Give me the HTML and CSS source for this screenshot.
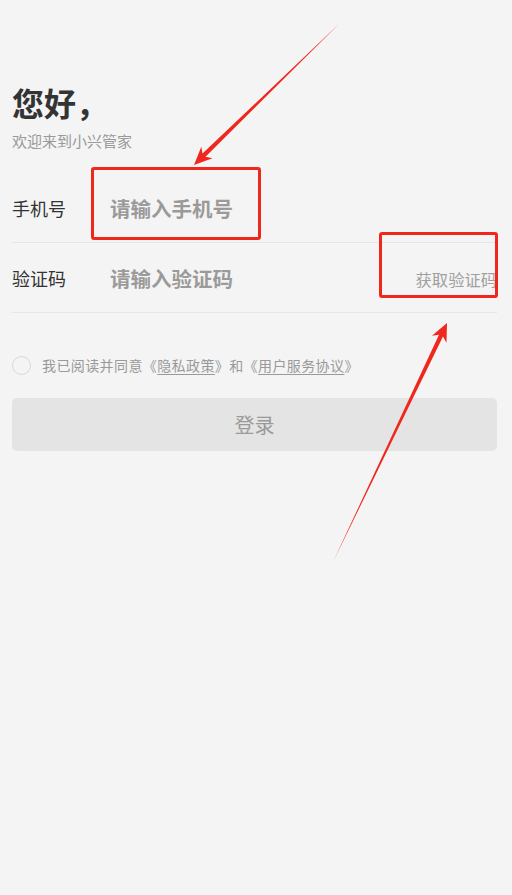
FILE: index.html
```html
<!DOCTYPE html>
<html lang="zh-Hans">

<head>
  <meta charset="UTF-8" />
  <meta name="viewport" content="width=device-width, initial-scale=1.0" />
  <title>登录</title>
  <link rel="stylesheet" href="styles.css">
</head>

<body>
  <div class="page">
    <h1 class="hello">您好，</h1>
    <div class="welcome">欢迎来到小兴管家</div>

    <div class="form">
      <div class="row">
        <div class="label">手机号</div>
        <div class="input">请输入手机号</div>
      </div>
      <div class="row">
        <div class="label">验证码</div>
        <div class="input">请输入验证码</div>
        <div class="get-code">获取验证码</div>
      </div>
    </div>

    <div class="agree">
      <span class="check"></span>
      <span>我已阅读并同意《<u>隐私政策</u>》和《<u>用户服务协议</u>》</span>
    </div>

    <div class="login-btn">登录</div>
  </div>

  <!-- 标注 -->
  <div class="mark mark-phone"></div>
  <div class="mark mark-code"></div>
  <svg class="arrows" width="512" height="895" viewBox="0 0 512 895">
    <polygon fill="#f0271c" points="340,23 202.5,153.6 201.3,146.7 194,165 212.5,158.2 205.5,156.8" />
    <polygon fill="#f0271c" points="333,562 443,336.6 446.5,342.7 447,323 432,335.8 439,334.7" />
  </svg>
</body>

</html>
```

FILE: styles.css
```css
* {
  box-sizing: border-box;
}

body {
  margin: 0;
  background-color: #f4f4f4;
  font-family: "Noto Sans CJK SC", "Noto Sans", sans-serif;
  color: #333;
}

.page {
  padding: 80px 15px 0 12px;
}

.hello {
  font-size: 32px;
  font-weight: bold;
  line-height: 44px;
  margin: 0;
  color: #333;
}

.welcome {
  font-size: 15px;
  line-height: 22px;
  color: #999;
  margin-top: 6px;
}

.form {
  margin-top: 21px;
}

.row {
  display: flex;
  align-items: center;
  height: 70px;
  border-bottom: 1px solid #e6e6e6;
}

.label {
  width: 98px;
  font-size: 18px;
  color: #333;
}

.input {
  flex: 1;
  font-size: 20.5px;
  font-weight: bold;
  color: #9a9a9a;
}

.get-code {
  font-size: 16.3px;
  color: #a0a0a0;
  padding-top: 2px;
}

.agree {
  display: flex;
  align-items: center;
  gap: 11px;
  margin-top: 42px;
  font-size: 14px;
  letter-spacing: 0.4px;
  color: #999;
}

.agree u {
  text-underline-offset: 3px;
}

.check {
  width: 19px;
  height: 19px;
  border: 1px solid #d8d8d8;
  border-radius: 50%;
}

.login-btn {
  margin-top: 23px;
  height: 53px;
  border-radius: 5px;
  background-color: #e4e4e4;
  color: #9a9a9a;
  font-size: 20px;
  display: flex;
  justify-content: center;
  align-items: center;
}

.mark {
  position: absolute;
  border: 3px solid #f0271c;
  border-radius: 3px;
}

.mark-phone {
  left: 91px;
  top: 167px;
  width: 170px;
  height: 73px;
}

.mark-code {
  left: 379px;
  top: 232px;
  width: 119px;
  height: 66px;
}

.arrows {
  position: absolute;
  left: 0;
  top: 0;
  pointer-events: none;
}
```
